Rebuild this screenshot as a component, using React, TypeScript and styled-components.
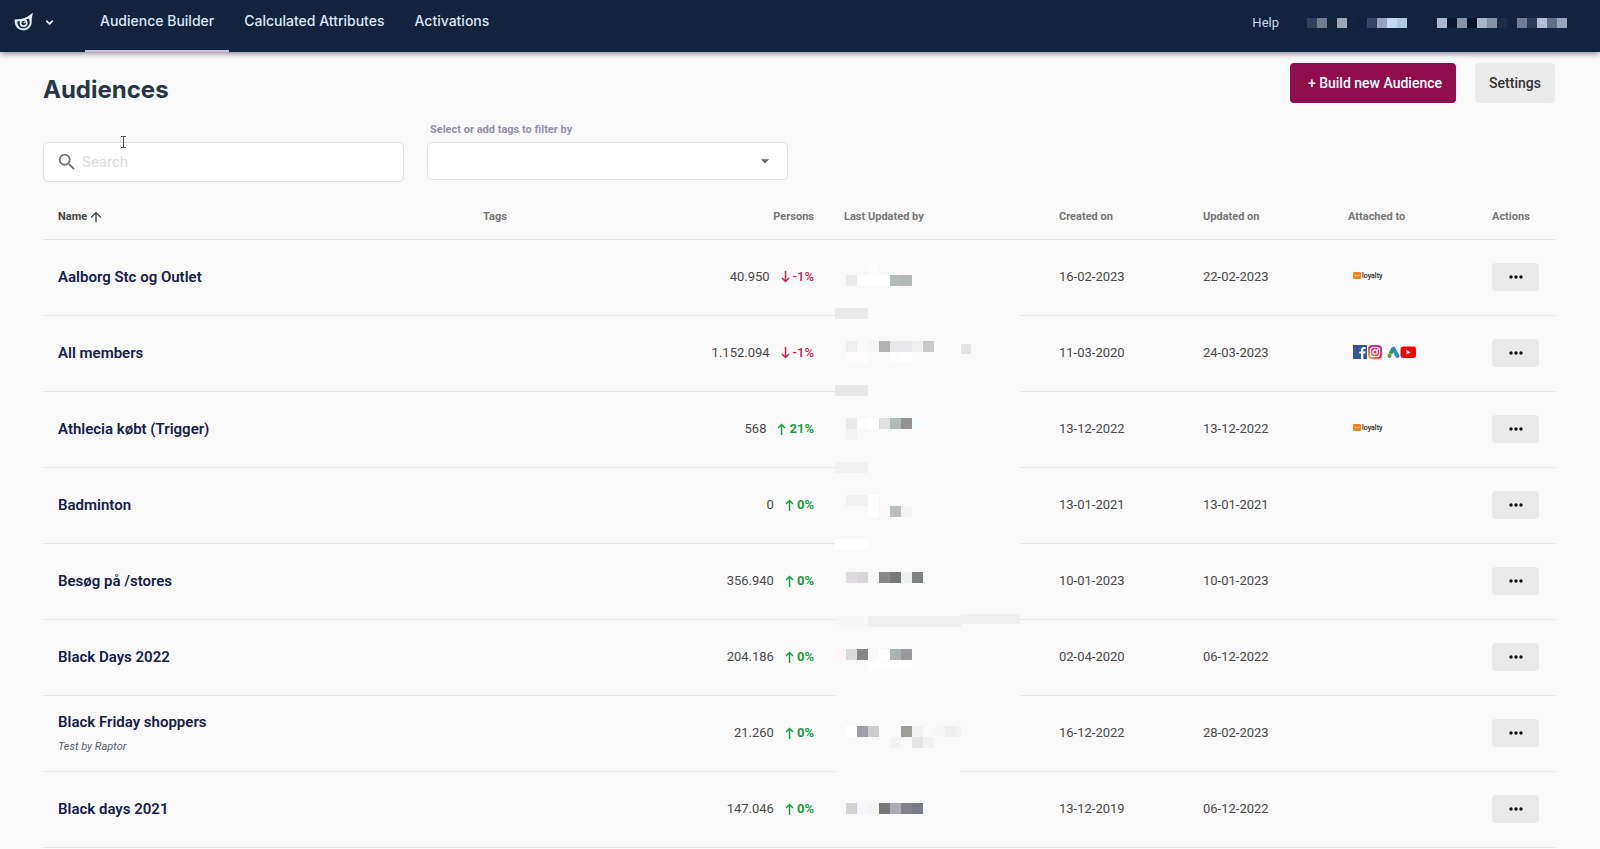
import React from "react";
import styled, { createGlobalStyle } from "styled-components";
import { MdArrowDropDown, MdArrowUpward, MdMoreHoriz, MdSearch } from "react-icons/md";
import { LuChevronDown } from "react-icons/lu";

const GlobalStyle = createGlobalStyle`
  * { box-sizing: border-box; }
  body {
    margin: 0;
    background: #f9f9f9;
    color: #4a4a4a;
    font-family: Roboto, "Liberation Sans", sans-serif;
    font-size: 13px;
  }
  button, input, select { font-family: inherit; }
`;

const TopBar = styled.header`
  position: relative;
  display: flex;
  align-items: stretch;
  height: 52px;
  padding: 0 33px 0 14px;
  background: #12233f;
  box-shadow: 0 1px 6px rgba(40, 20, 50, 0.6);
`;

const BrandButton = styled.button`
  display: flex;
  align-items: center;
  gap: 10px;
  width: 71px;
  padding: 0 0 8px;
  border: 0;
  background: none;
  color: #e6ecf8;
`;

const Tabs = styled.nav`
  display: flex;
  flex: 1;
`;

const Tab = styled.a<{ $active?: boolean }>`
  padding: 0 15px;
  border-bottom: 2px solid ${(p) => (p.$active ? "#cdbfd6" : "transparent")};
  color: #dbe6f8;
  font: 500 14px/42px Inter, sans-serif;
  text-decoration: none;
  white-space: nowrap;
`;

const Account = styled.div`
  display: flex;
  align-items: center;
  gap: 28px;
  padding-bottom: 8px;
`;

const HelpLink = styled.a`
  color: #c9d6ec;
  font-size: 13px;
  text-decoration: none;
`;

const AccountNames = styled.div`
  display: flex;
  gap: 30px;
  padding-top: 2px;
`;

const Page = styled.main`
  padding: 11px 45px 0 43px;
`;

const PageHead = styled.div`
  display: flex;
  justify-content: space-between;
  height: 40px;
`;

const Title = styled.h1`
  margin: 0;
  padding-top: 9px;
  color: #253746;
  font: 700 24px/36px Inter, sans-serif;
`;

const HeadActions = styled.div`
  display: flex;
  gap: 19px;
`;

const ActionButton = styled.button<{ $primary?: boolean }>`
  min-width: 80px;
  height: 40px;
  padding: 0 14px 0 ${(p) => (p.$primary ? "18px" : "14px")};
  border: 0;
  border-radius: 4px;
  background: ${(p) => (p.$primary ? "#8f0d4b" : "#ebebeb")};
  color: ${(p) => (p.$primary ? "#fff" : "#333")};
  font-size: 14px;
  font-weight: 500;
`;

const Filters = styled.div`
  display: flex;
  gap: 23px;
  padding-top: 19px;
`;

const Field = styled.div`
  position: relative;
  display: flex;
  flex-direction: column;
  width: 361px;
`;

const SearchField = styled(Field)`
  padding-top: 20px;
`;

const FieldLabel = styled.label`
  height: 20px;
  padding-left: 3px;
  color: #9691a6;
  font-size: 11px;
  font-weight: 700;
  line-height: 16px;
`;

const SearchBox = styled.div`
  display: flex;
  align-items: center;
  gap: 4px;
  height: 40px;
  padding: 0 12px 1px;
  border: 1px solid #e2e2e2;
  border-radius: 5px;
  background: #fff;
  color: #777;
`;

const SearchInput = styled.input`
  flex: 1;
  min-width: 0;
  padding: 0;
  border: 0;
  outline: 0;
  background: none;
  font-size: 15px;
  &::placeholder { color: #dcdcdc; opacity: 1; }
`;

const SelectBox = styled.div`
  display: grid;
  align-items: center;
  height: 38px;
  color: #666;
  & > * { grid-area: 1 / 1; }
  & > svg { justify-self: end; margin-right: 13px; pointer-events: none; }
`;

const TagSelect = styled.select`
  width: 100%;
  height: 38px;
  border: 1px solid #e2e2e2;
  border-radius: 5px;
  background: #fff;
  appearance: none;
`;

const Pointer = styled.svg`
  position: absolute;
  left: 78px;
  top: 14px;
`;

const Table = styled.table`
  width: 100%;
  margin-top: 12px;
  border-collapse: separate;
  border-spacing: 0;
  table-layout: fixed;
`;

const HeadCell = styled.th<{ $right?: boolean; $sorted?: boolean }>`
  height: 46px;
  padding: 0 15px;
  border-bottom: 1px solid #e4e4e4;
  color: ${(p) => (p.$sorted ? "#444" : "#777")};
  font-size: 11px;
  font-weight: 700;
  text-align: ${(p) => (p.$right ? "right" : "left")};
  white-space: nowrap;
`;

const SortLabel = styled.span`
  display: flex;
  align-items: center;
  gap: 1px;
`;

const Cell = styled.td<{ $right?: boolean }>`
  position: relative;
  height: 76px;
  padding: 0 15px 2px;
  border-bottom: 1px solid #e6e6e6;
  text-align: ${(p) => (p.$right ? "right" : "left")};
  white-space: nowrap;
`;

const AudienceLink = styled.a`
  display: block;
  color: #16204a;
  font-size: 15px;
  font-weight: 600;
  line-height: 20px;
  text-decoration: none;
`;

const Note = styled.em`
  display: block;
  padding-top: 9px;
  color: #5d6070;
  font-size: 11px;
  line-height: 12px;
`;

const Persons = styled.span`
  display: inline-flex;
  align-items: center;
  gap: 11px;
`;

const Trend = styled.span<{ $up: boolean }>`
  display: inline-flex;
  align-items: center;
  gap: 3px;
  color: ${(p) => (p.$up ? "#17a047" : "#c8234f")};
  font-weight: ${(p) => (p.$up ? 700 : 500)};
`;

const Redaction = styled.svg`
  position: absolute;
  left: 6px;
  top: 0;
  overflow: visible;
`;

const Attachments = styled.span`
  display: flex;
  align-items: center;
  padding: 0 0 2px 5px;
`;

const LoyaltyLogo = styled.span`
  display: flex;
  align-items: center;
  gap: 1px;
  color: #222;
  font-size: 7px;
  font-weight: 500;
  line-height: 8px;
`;

const MoreButton = styled.button`
  display: flex;
  align-items: center;
  justify-content: center;
  width: 47px;
  height: 28px;
  padding: 0;
  border: 0;
  border-radius: 4px;
  background: #e9e9e9;
  color: #111;
`;

type Block = [x: number, y: number, fill: string, w?: number, h?: number];

interface Audience {
  name: string;
  note?: string;
  persons: string;
  change: string;
  created: string;
  updated: string;
  attached?: "loyalty" | "social";
  cover: number;
  blocks: Block[];
}

const audiences: Audience[] = [
  {
    name: "Aalborg Stc og Outlet", persons: "40.950", change: "-1%",
    created: "16-02-2023", updated: "22-02-2023", attached: "loyalty", cover: 185,
    blocks: [[11, 35, "#ececeb"], [22, 35, "#fff", 33], [33, 24, "#fcfcfc"], [55, 35, "#b2bcba"], [66, 35, "#b3b8b6"], [0, 68, "#ebebeb", 33]],
  },
  {
    name: "All members", persons: "1.152.094", change: "-1%",
    created: "11-03-2020", updated: "24-03-2023", attached: "social", cover: 185,
    blocks: [[11, 25, "#efeeef"], [33, 25, "#f6f6f6"], [44, 25, "#b2b2b2"], [55, 25, "#e7e7e9", 22], [77, 25, "#eeeeef"], [88, 25, "#c9c9c8"], [126, 28, "#e4e4e3", 10, 10], [11, 36, "#fffbfc", 22], [55, 36, "#fdfdff"], [66, 36, "#fff"], [0, 69, "#e8e8e8", 33]],
  },
  {
    name: "Athlecia købt (Trigger)", persons: "568", change: "21%",
    created: "13-12-2022", updated: "13-12-2022", attached: "loyalty", cover: 185,
    blocks: [[11, 26, "#ebebec"], [22, 26, "#fcfdff"], [33, 26, "#fff"], [44, 26, "#dfdfe0"], [55, 26, "#b2bab8"], [66, 26, "#929193"], [77, 26, "#f2fcff"], [11, 37, "#f4f2f5"], [0, 70, "#f1f1f1", 33]],
  },
  {
    name: "Badminton", persons: "0", change: "0%",
    created: "13-01-2021", updated: "13-01-2021", cover: 185,
    blocks: [[11, 27, "#f1f1f1", 22], [33, 27, "#fff"], [33, 38, "#fff"], [44, 38, "#faf7f8"], [55, 38, "#bbbfc2"], [66, 38, "#f5f2f2"], [0, 71, "#fefefe", 33]],
  },
  {
    name: "Besøg på /stores", persons: "356.940", change: "0%",
    created: "10-01-2023", updated: "10-01-2023", cover: 185,
    blocks: [[11, 28, "#dedcdf"], [22, 28, "#d8d6d9"], [44, 28, "#878787"], [55, 28, "#777978"], [66, 28, "#eef1ef"], [77, 28, "#7e8280"], [0, 72, "#f7f7f7", 33], [33, 72, "#efefef", 93], [126, 70, "#efefef", 59, 10]],
  },
  {
    name: "Black Days 2022", persons: "204.186", change: "0%",
    created: "02-04-2020", updated: "06-12-2022", cover: 185,
    blocks: [[0, 29, "#fff5fa"], [11, 29, "#dadadb"], [22, 29, "#868684"], [44, 29, "#fff"], [55, 29, "#a9b1b1"], [66, 29, "#9a9a9c"], [33, 40, "#fdfdfd", 44]],
  },
  {
    name: "Black Friday shoppers", note: "Test by Raptor", persons: "21.260", change: "0%",
    created: "16-12-2022", updated: "28-02-2023", cover: 126,
    blocks: [[11, 30, "#fffffe"], [22, 30, "#9fa0a7"], [33, 30, "#cdcdd0"], [66, 30, "#9c9d96"], [77, 30, "#f2f2f3"], [99, 30, "#f6f7f7"], [110, 30, "#f0eff0"], [121, 30, "#f3f3f3", 5], [55, 41, "#f1f4f3"], [77, 41, "#e5e4e6"], [88, 41, "#f2f2f3"]],
  },
  {
    name: "Black days 2021", persons: "147.046", change: "0%",
    created: "13-12-2019", updated: "06-12-2022", cover: 0,
    blocks: [[11, 31, "#d5d3d4"], [22, 31, "#f7f6fe"], [33, 31, "#f5f4f5"], [44, 31, "#7a7778"], [55, 31, "#acaab5"], [66, 31, "#838286"], [77, 31, "#797b8b"]],
  },
];

const customerShades = ["#2f415d", "#6c7f8e", "#12233a", "#9ca8b6", "#12233f", "#11203c", "#334664", "#93a5be", "#c3d7f0", "#b2c9e4"];
const userShades = ["#a9b8d0", "#0b1a30", "#8494a4", "#04122b", "#a8b6c9", "#8593a4", "#1d2c45", "#12233f", "#6e7d9a", "#2d3d55", "#b0bfd5", "#5d6e86", "#97a6ba"];

function ShadeStrip({ shades }: { shades: string[] }) {
  return (
    <svg width={shades.length * 10} height="10" shapeRendering="crispEdges" aria-hidden="true">
      {shades.map((fill, i) => <rect key={i} x={i * 10} width="10" height="10" fill={fill} />)}
    </svg>
  );
}

function BrandMark() {
  return (
    <svg width="20" height="20" viewBox="0 0 20 20" fill="none" aria-hidden="true">
      <path d="M0.600 7.600C0.200 14.500 4.400 18.400 9.300 18.400S18 14.600 17.700 9.200C17.600 6.500 18.200 4 19 0.800L12.500 5.200C9 6.900 5 7.200 0.600 7.600Z" fill="#e6ecf8" />
      <path d="M3.200 9.400C3.400 13.800 5.900 16.300 9.400 16.300S15.700 13.700 15.700 10.300C15.700 8.500 15.200 7.500 14.600 6.600C10.800 8.600 7 9.100 3.200 9.400Z" fill="#12233f" />
      <circle cx="9.600" cy="11" r="4" fill="#e6ecf8" />
      <circle cx="9.600" cy="11.200" r="2.100" fill="#12233f" />
      <circle cx="10.300" cy="10.500" r="0.800" fill="#e6ecf8" />
    </svg>
  );
}

function TrendArrow({ up }: { up: boolean }) {
  return (
    <svg width="9" height="12" viewBox="0 0 9 12" fill="none" stroke="currentColor" strokeWidth="1.500" aria-hidden="true">
      <path d={up ? "M4.500 12V1.500M1 5L4.500 1.500L8 5" : "M4.500 0V10.500M1 7L4.500 10.500L8 7"} />
    </svg>
  );
}

function SocialLogos() {
  return (
    <svg width="64" height="16" viewBox="0 0 64 16" role="img" aria-label="Facebook, Instagram, Google Ads, YouTube">
      <defs>
        <linearGradient id="insta" x1="0" y1="1" x2="1" y2="0">
          <stop offset="0" stopColor="#ffc947" />
          <stop offset="0.450" stopColor="#f2344e" />
          <stop offset="1" stopColor="#9b36c9" />
        </linearGradient>
      </defs>
      <rect y="1" width="14" height="14" fill="#36569b" />
      <path d="M8 15V9.600H6.200V7.400H8V6C8 4 9 3 11 3H12.600V5H11.500C10.600 5 10.300 5.400 10.300 6.200V7.400H12.600L12.200 9.600H10.300V15Z" fill="#fff" />
      <rect x="15" y="1" width="14" height="14" rx="4" fill="url(#insta)" />
      <rect x="17.500" y="3.500" width="9" height="9" rx="2.600" fill="none" stroke="#fff" strokeWidth="1.200" />
      <circle cx="22" cy="8" r="2.200" fill="none" stroke="#fff" strokeWidth="1.200" />
      <circle cx="24.700" cy="5.300" r="0.700" fill="#fff" />
      <path d="M40 4.500L36.200 11.800" stroke="#e6b91e" strokeWidth="3.600" />
      <path d="M40.200 4.700L37.600 9.500" stroke="#2f9a5c" strokeWidth="3.600" />
      <path d="M40.500 4.600L44.500 12" stroke="#2f7fd0" strokeWidth="3.800" strokeLinecap="round" />
      <circle cx="36.400" cy="12" r="1.900" fill="#34a853" />
      <rect x="47.500" y="2.500" width="15.500" height="11.500" rx="3" fill="#f90000" />
      <path d="M53.500 5.800L57.500 8.200L53.500 10.600Z" fill="#fff" />
    </svg>
  );
}

function Loyalty() {
  return (
    <LoyaltyLogo>
      <svg width="8" height="7" viewBox="0 0 8 7" aria-hidden="true">
        <rect width="8" height="7" rx="1" fill="#f08424" />
        <path d="M1.500 3.500H6.500" stroke="#f8b878" />
      </svg>
      loyalty
    </LoyaltyLogo>
  );
}

function AudienceRow({ item }: { item: Audience }) {
  const up = !item.change.startsWith("-");
  return (
    <tr>
      <Cell>
        <AudienceLink href="#">{item.name}</AudienceLink>
        {item.note && <Note>{item.note}</Note>}
      </Cell>
      <Cell />
      <Cell $right>
        <Persons>
          {item.persons}
          <Trend $up={up}><TrendArrow up={up} />{item.change}</Trend>
        </Persons>
      </Cell>
      <Cell>
        <Redaction width="185" height="76" shapeRendering="crispEdges" aria-hidden="true">
          <rect y="74" width={item.cover} height="3" fill="#f9f9f9" />
          {item.blocks.map(([x, y, fill, w = 11, h = 11], i) => (
            <rect key={i} x={x} y={y} width={w} height={h} fill={fill} />
          ))}
        </Redaction>
      </Cell>
      <Cell>{item.created}</Cell>
      <Cell>{item.updated}</Cell>
      <Cell>
        {item.attached && <Attachments>{item.attached === "loyalty" ? <Loyalty /> : <SocialLogos />}</Attachments>}
      </Cell>
      <Cell>
        <MoreButton aria-label={`Actions for ${item.name}`}><MdMoreHoriz size={20} /></MoreButton>
      </Cell>
    </tr>
  );
}

export default function App() {
  return (
    <>
      <GlobalStyle />
      <TopBar>
        <BrandButton aria-label="Switch product">
          <BrandMark />
          <LuChevronDown size={11} strokeWidth={4} />
        </BrandButton>
        <Tabs>
          <Tab href="#" $active>Audience Builder</Tab>
          <Tab href="#">Calculated Attributes</Tab>
          <Tab href="#">Activations</Tab>
        </Tabs>
        <Account>
          <HelpLink href="#">Help</HelpLink>
          <AccountNames>
            <ShadeStrip shades={customerShades} />
            <ShadeStrip shades={userShades} />
          </AccountNames>
        </Account>
      </TopBar>
      <Page>
        <PageHead>
          <Title>Audiences</Title>
          <HeadActions>
            <ActionButton $primary>+ Build new Audience</ActionButton>
            <ActionButton>Settings</ActionButton>
          </HeadActions>
        </PageHead>
        <Filters>
          <SearchField>
            <SearchBox>
              <MdSearch size={22} />
              <SearchInput type="text" aria-label="Search audiences" placeholder="Search" />
            </SearchBox>
            <Pointer width="5" height="12" viewBox="0 0 5 12" aria-hidden="true">
              <path d="M0 0.500H5M2.500 0.500V11.500M0 11.500H5" stroke="#555" />
            </Pointer>
          </SearchField>
          <Field>
            <FieldLabel htmlFor="tags">Select or add tags to filter by</FieldLabel>
            <SelectBox>
              <TagSelect id="tags" />
              <MdArrowDropDown size={20} />
            </SelectBox>
          </Field>
        </Filters>
        <Table>
          <colgroup>
            <col />
            <col width="217" />
            <col width="144" />
            <col width="215" />
            <col width="144" />
            <col width="145" />
            <col width="144" />
            <col width="78" />
          </colgroup>
          <thead>
            <tr>
              <HeadCell $sorted><SortLabel>Name <MdArrowUpward size={16} /></SortLabel></HeadCell>
              <HeadCell>Tags</HeadCell>
              <HeadCell $right>Persons</HeadCell>
              <HeadCell>Last Updated by</HeadCell>
              <HeadCell>Created on</HeadCell>
              <HeadCell>Updated on</HeadCell>
              <HeadCell>Attached to</HeadCell>
              <HeadCell>Actions</HeadCell>
            </tr>
          </thead>
          <tbody>
            {audiences.map((item) => <AudienceRow key={item.name} item={item} />)}
          </tbody>
        </Table>
      </Page>
    </>
  );
}
